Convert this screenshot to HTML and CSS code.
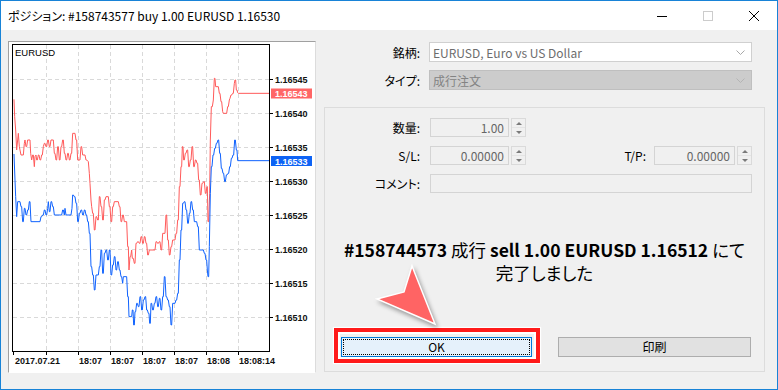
FILE: index.html
```html
<!DOCTYPE html>
<html lang="ja">
<head>
<meta charset="utf-8">
<title>ポジション</title>
<link rel="stylesheet" href="styles.css">
</head>
<body>
<div class="window">
  <div class="titlebar">
    <div class="title">ポジション: #158743577 buy 1.00 EURUSD 1.16530</div>
    <div class="controls">
      <div class="ctl"><svg width="10" height="10" viewBox="0 0 10 10"><line x1="0" y1="5.5" x2="10" y2="5.5" stroke="#000" stroke-width="1"/></svg></div>
      <div class="ctl"><svg width="10" height="10" viewBox="0 0 10 10"><rect x="0.5" y="0.5" width="9" height="9" fill="none" stroke="#cccccc" stroke-width="1"/></svg></div>
      <div class="ctl"><svg width="10" height="10" viewBox="0 0 10 10"><path d="M0 0 L10 10 M10 0 L0 10" stroke="#000" stroke-width="1"/></svg></div>
    </div>
  </div>
  <div class="body">
    <div class="chart-frame">
      <svg class="chart" width="306" height="330" viewBox="0 0 306 330">
        <g class="grid" stroke="#d9d9d9" stroke-width="1" stroke-dasharray="4 3">
          <line x1="37.5" y1="3" x2="37.5" y2="309"/>
          <line x1="69.5" y1="3" x2="69.5" y2="309"/>
          <line x1="101.5" y1="3" x2="101.5" y2="309"/>
          <line x1="133.5" y1="3" x2="133.5" y2="309"/>
          <line x1="165.5" y1="3" x2="165.5" y2="309"/>
          <line x1="197.5" y1="3" x2="197.5" y2="309"/>
          <line x1="229.5" y1="3" x2="229.5" y2="309"/>
          <line x1="4" y1="37.5" x2="260" y2="37.5"/>
          <line x1="4" y1="71.5" x2="260" y2="71.5"/>
          <line x1="4" y1="105.5" x2="260" y2="105.5"/>
          <line x1="4" y1="139.5" x2="260" y2="139.5"/>
          <line x1="4" y1="173.5" x2="260" y2="173.5"/>
          <line x1="4" y1="207.5" x2="260" y2="207.5"/>
          <line x1="4" y1="241.5" x2="260" y2="241.5"/>
          <line x1="4" y1="275.5" x2="260" y2="275.5"/>
        </g>
        <g transform="translate(-9 -2) scale(0.333333)" fill="none">
          <polyline vector-effect="non-scaling-stroke" stroke="#ff5a5a" stroke-width="1" points="42,178 44,230 47,270 50,330 53,300 55,280 58,320 60,330 63,345 70,345 73,310 75,300 78,320 80,320 83,300 90,300 92,340 95,360 98,345 100,345 103,380 105,350 108,345 110,360 112,360 115,345 117,345 120,360 122,360 125,345 127,345 130,320 133,310 135,310 138,320 140,320 143,300 145,300 148,320 150,320 153,300 160,300 163,340 165,340 168,360 170,360 173,320 175,320 178,360 180,360 183,320 185,320 188,300 190,300 193,340 195,340 198,360 200,360 203,340 205,340 208,360 210,360 213,340 215,340 218,280 225,280 228,300 230,300 233,360 240,360 243,320 245,320 248,345 255,345 258,360 260,360 265,365 268,400 270,430 273,480 275,500 278,520 280,520 283,570 285,570 288,530 290,530 293,540 295,540 298,470 300,470 303,500 305,500 308,540 310,540 313,480 315,480 318,470 325,470 328,500 330,500 333,545 335,545 338,500 340,500 343,485 355,485 358,500 360,500 363,545 365,545 368,525 370,525 373,545 380,545 383,620 385,620 387,690 390,650 392,650 395,630 397,655 400,655 403,670 405,670 408,610 410,610 413,605 415,605 418,610 420,610 423,590 425,590 428,610 430,610 433,590 435,590 438,610 440,610 443,645 445,645 448,630 465,630 468,605 470,605 473,610 475,610 478,605 480,605 483,630 485,630 488,580 495,580 498,525 500,525 503,600 505,600 508,645 510,645 513,620 515,620 518,600 525,600 528,580 530,580 533,540 535,540 538,440 540,440 543,380 545,380 547,320 549,320 551,360 553,360 556,340 558,340 561,330 563,330 566,380 568,380 571,360 573,360 576,320 578,320 581,380 583,380 586,360 588,360 591,370 593,370 596,420 598,420 601,465 603,465 606,430 608,430 611,425 613,425 616,460 618,460 621,440 622,440 624,545 626,545 629,460 631,300 634,200 637,200 640,180 643,115 645,115 647,140 655,140 658,160 660,160 663,185 665,185 668,215 670,220 680,220 683,200 685,200 688,180 690,175 693,165 695,165 698,160 700,160 703,130 705,120 707,120 709,150 711,150 713,158 715,160 810,160"/>
          <polyline vector-effect="non-scaling-stroke" stroke="#0f62fe" stroke-width="1" points="42,342 45,420 47,470 50,530 53,485 60,485 63,500 65,500 68,545 70,545 73,505 75,505 78,525 80,525 83,510 85,510 88,485 90,485 93,545 120,545 123,530 125,530 128,525 130,525 133,510 135,510 138,525 140,525 143,505 145,485 148,515 150,515 153,485 155,485 158,500 160,500 163,525 185,525 188,510 190,510 193,525 195,505 198,525 213,525 216,505 218,465 220,465 223,470 225,470 228,490 230,490 233,545 235,545 238,520 240,520 243,510 245,510 248,525 250,525 253,510 255,510 258,525 260,525 263,545 265,545 268,580 270,580 273,680 275,680 278,705 280,705 283,750 285,750 288,705 295,705 298,680 300,680 303,630 305,630 308,700 310,700 313,640 315,640 318,630 320,630 323,660 325,660 328,630 330,630 333,705 335,705 338,675 340,675 343,650 345,650 348,690 350,690 353,665 355,665 358,690 360,690 363,710 365,710 368,730 370,710 380,710 383,770 385,770 387,830 395,830 397,810 399,810 401,855 403,855 405,815 407,815 410,790 412,790 415,800 417,800 420,770 422,770 425,810 427,810 430,780 432,780 435,770 437,770 440,810 442,810 445,820 447,820 449,850 451,850 453,790 455,790 458,810 460,810 463,790 465,790 468,770 470,770 473,800 475,800 478,775 480,775 483,810 485,810 488,770 490,770 493,710 495,710 498,770 500,770 503,780 505,780 508,800 510,800 513,855 515,855 518,790 525,790 528,780 530,780 533,760 535,760 538,660 540,660 543,570 545,570 548,490 550,490 553,485 555,485 558,510 560,510 563,550 565,550 568,520 570,520 573,485 575,485 578,510 580,510 583,545 590,545 593,560 595,560 598,630 610,630 613,640 615,640 618,660 620,660 622,690 624,710 626,710 628,620 631,460 634,380 636,380 639,345 641,345 644,325 646,325 649,310 651,310 654,300 656,300 659,340 661,340 664,385 666,385 669,400 671,400 674,425 676,425 679,405 681,405 684,400 686,400 689,380 691,380 694,355 696,355 699,345 701,345 704,300 706,300 709,330 711,330 713,362 810,362"/>
        </g>
        <rect x="3.5" y="2.5" width="257" height="307" fill="none" stroke="#000" stroke-width="1"/>
        <g stroke="#000" stroke-width="1">
          <line x1="261" y1="37.5" x2="264" y2="37.5"/>
          <line x1="261" y1="71.5" x2="264" y2="71.5"/>
          <line x1="261" y1="105.5" x2="264" y2="105.5"/>
          <line x1="261" y1="139.5" x2="264" y2="139.5"/>
          <line x1="261" y1="173.5" x2="264" y2="173.5"/>
          <line x1="261" y1="207.5" x2="264" y2="207.5"/>
          <line x1="261" y1="241.5" x2="264" y2="241.5"/>
          <line x1="261" y1="275.5" x2="264" y2="275.5"/>
          <line x1="4.5" y1="310" x2="4.5" y2="313"/>
          <line x1="37.5" y1="310" x2="37.5" y2="313"/>
          <line x1="69.5" y1="310" x2="69.5" y2="313"/>
          <line x1="101.5" y1="310" x2="101.5" y2="313"/>
          <line x1="133.5" y1="310" x2="133.5" y2="313"/>
          <line x1="165.5" y1="310" x2="165.5" y2="313"/>
          <line x1="197.5" y1="310" x2="197.5" y2="313"/>
          <line x1="229.5" y1="310" x2="229.5" y2="313"/>
        </g>
        <rect x="262" y="46.5" width="41" height="10" fill="#ff6666"/>
        <rect x="262" y="114" width="41" height="10" fill="#0d63f5"/>
        <g class="axis">
          <text x="6" y="14" class="sym">EURUSD</text>
          <text x="266" y="41">1.16545</text>
          <text x="266" y="55" class="light">1.16543</text>
          <text x="266" y="75">1.16540</text>
          <text x="266" y="109">1.16535</text>
          <text x="266" y="122.5" class="light">1.16533</text>
          <text x="266" y="143">1.16530</text>
          <text x="266" y="177">1.16525</text>
          <text x="266" y="211">1.16520</text>
          <text x="266" y="245">1.16515</text>
          <text x="266" y="279">1.16510</text>
          <text x="6" y="322">2017.07.21</text>
          <text x="70" y="322">18:07</text>
          <text x="102" y="322">18:07</text>
          <text x="134" y="322">18:07</text>
          <text x="166" y="322">18:07</text>
          <text x="198" y="322">18:08</text>
          <text x="230" y="322">18:08:14</text>
        </g>
      </svg>
    </div>
    <div class="form">
      <div class="row">
        <div class="lbl">銘柄:</div>
        <div class="combo">
          <span class="val">EURUSD, Euro vs US Dollar</span>
          <span class="arrow"><svg width="9" height="5" viewBox="0 0 9 5"><polyline points="0.5,0.5 4.5,4.5 8.5,0.5" fill="none" stroke="#a8a8a8" stroke-width="1"/></svg></span>
        </div>
      </div>
      <div class="row">
        <div class="lbl">タイプ:</div>
        <div class="combo disabled">
          <span class="val">成行注文</span>
          <span class="arrow"><svg width="9" height="5" viewBox="0 0 9 5"><polyline points="0.5,0.5 4.5,4.5 8.5,0.5" fill="none" stroke="#b4b4b4" stroke-width="1"/></svg></span>
        </div>
      </div>
      <div class="group">
        <div class="row">
          <div class="lbl">数量:</div>
          <div class="field">1.00</div>
          <div class="spin"><span class="up"></span><span class="down"></span></div>
        </div>
        <div class="row">
          <div class="lbl">S/L:</div>
          <div class="field">0.00000</div>
          <div class="spin"><span class="up"></span><span class="down"></span></div>
          <div class="lbl-tp">T/P:</div>
          <div class="field tp">0.00000</div>
          <div class="spin"><span class="up"></span><span class="down"></span></div>
        </div>
        <div class="row">
          <div class="lbl">コメント:</div>
          <div class="field comment"></div>
        </div>
        <div class="message">
          <p><b>#158744573</b> 成行 <b>sell 1.00 EURUSD 1.16512</b> にて</p>
          <p>完了しました</p>
        </div>
        <div class="buttons">
          <button class="btn ok"><span class="focus">OK</span></button>
          <button class="btn print">印刷</button>
        </div>
      </div>
    </div>
  </div>
  <div class="highlight"></div>
  <svg class="pointer" width="80" height="80" viewBox="0 0 80 80">
    <polygon points="46,10 38,36 11,43 69,68" fill="#ff6464" stroke="#fff" stroke-width="1.5" stroke-linejoin="miter"/>
  </svg>
</div>
</body>
</html>
```

FILE: styles.css
```css
html, body {
  margin: 0;
  padding: 0;
  background: #f0f0f0;
}

.window {
  position: relative;
  width: 778px;
  height: 390px;
  box-sizing: border-box;
  border: 1px solid #1883d7;
  background: #f0f0f0;
  font-family: "Noto Sans CJK JP", "Noto Sans", sans-serif;
  font-size: 12px;
  color: #000;
  font-feature-settings: "palt";
  overflow: hidden;
}

.titlebar {
  height: 29px;
  background: #fff;
  display: flex;
  align-items: center;
}

.title {
  flex: 1;
  padding-left: 7px;
  white-space: nowrap;
  line-height: 29px;
}

.controls {
  display: flex;
  height: 29px;
}

.ctl {
  width: 46px;
  height: 29px;
  display: flex;
  align-items: center;
  justify-content: center;
}

.ctl svg {
  display: block;
}

.body {
  display: flex;
  padding: 11px 0 0 7px;
}

.chart-frame {
  flex: none;
  width: 308px;
  height: 332px;
  box-sizing: border-box;
  border: 1px solid;
  border-color: #a0a0a0 #dcdcdc #ffffff #a0a0a0;
  background: #fff;
}

.chart {
  display: block;
}

.axis text {
  font-family: "Liberation Sans", Arial, sans-serif;
  font-size: 9px;
  font-weight: bold;
  fill: #111;
}

.axis text.sym {
  font-weight: normal;
  font-size: 9.5px;
  fill: #000;
}

.axis text.light {
  fill: #fff;
}

.form {
  flex: none;
  margin-left: 8px;
  width: 441px;
  padding-top: 1px;
  display: flex;
  flex-direction: column;
}

.row {
  display: flex;
  align-items: center;
  height: 20px;
}

.row + .row {
  margin-top: 8px;
}

.lbl {
  flex: none;
  width: 96px;
  text-align: right;
  white-space: nowrap;
}

.combo {
  flex: none;
  margin-left: 9px;
  width: 323px;
  height: 20px;
  box-sizing: border-box;
  border: 1px solid #d0d0d0;
  background: #fff;
  display: flex;
  align-items: center;
  color: #6d6d6d;
}

.combo .val {
  flex: 1;
  padding-left: 3px;
  white-space: nowrap;
}

.combo .arrow {
  width: 22px;
  height: 18px;
  display: flex;
  align-items: center;
  justify-content: center;
}

.combo .arrow svg {
  display: block;
}

.combo.disabled {
  background: #cccccc;
  border-color: #bfbfbf;
  color: #838383;
}

.group {
  margin-top: 17px;
  height: 265px;
  box-sizing: border-box;
  border: 1px solid #dcdcdc;
  padding: 10px 0 14px 0;
  display: flex;
  flex-direction: column;
}

.group .row {
  height: 19px;
}

.group .row + .row {
  margin-top: 9px;
}

.group .lbl {
  width: 95px;
}

.field {
  flex: none;
  margin-left: 10px;
  width: 79px;
  height: 19px;
  box-sizing: border-box;
  border: 1px solid #d4d4d4;
  background: #f0f0f0;
  text-align: right;
  padding-right: 4px;
  line-height: 17px;
  color: #666;
}

.field.tp {
  margin-left: 8px;
  width: 81px;
}

.field.comment {
  width: 322px;
}

.lbl-tp {
  flex: none;
  width: 120px;
  text-align: right;
}

.spin {
  flex: none;
  margin-left: 2px;
  width: 15px;
  height: 19px;
  box-sizing: border-box;
  border: 1px solid #dadada;
  background: #f0f0f0;
  display: flex;
  flex-direction: column;
}

.spin span {
  flex: 1;
  display: flex;
  align-items: center;
  justify-content: center;
}

.spin .up {
  border-bottom: 1px solid #e4e4e4;
}

.spin .up::before {
  content: "";
  border-left: 3px solid transparent;
  border-right: 3px solid transparent;
  border-bottom: 3px solid #7a7a7a;
}

.spin .down::before {
  content: "";
  border-left: 3px solid transparent;
  border-right: 3px solid transparent;
  border-top: 3px solid #7a7a7a;
}

.message {
  margin-top: 45px;
  text-align: center;
  font-size: 17.5px;
  line-height: 23px;
}

.message p {
  margin: 0;
  white-space: nowrap;
}

.message b {
  font-weight: bold;
}

.buttons {
  margin-top: auto;
  display: flex;
  padding-left: 16px;
}

.btn {
  height: 20px;
  box-sizing: border-box;
  margin: 0;
  padding: 0;
  font: inherit;
  font-size: 12px;
  color: #000;
  line-height: 16px;
}

.btn.ok {
  width: 191px;
  border: 1px solid #0078d7;
  background: #e5f1fb;
  padding: 1px;
}

.btn.ok .focus {
  display: block;
  height: 16px;
  box-sizing: border-box;
  border: 1px dotted #000;
  line-height: 14px;
}

.btn.print {
  margin-left: 26px;
  width: 193px;
  border: 1px solid #adadad;
  background: #e1e1e1;
}

.highlight {
  position: absolute;
  left: 333px;
  top: 327px;
  width: 206px;
  height: 35px;
  box-sizing: border-box;
  border: 4px solid #ff1a1a;
  box-shadow: 0 0 1px 1px rgba(255, 255, 255, 0.95), inset 0 0 0 2px #ffffff;
}

.pointer {
  position: absolute;
  left: 365px;
  top: 255px;
  overflow: visible;
  filter: drop-shadow(2px 3px 2px rgba(0, 0, 0, 0.35));
}
```
